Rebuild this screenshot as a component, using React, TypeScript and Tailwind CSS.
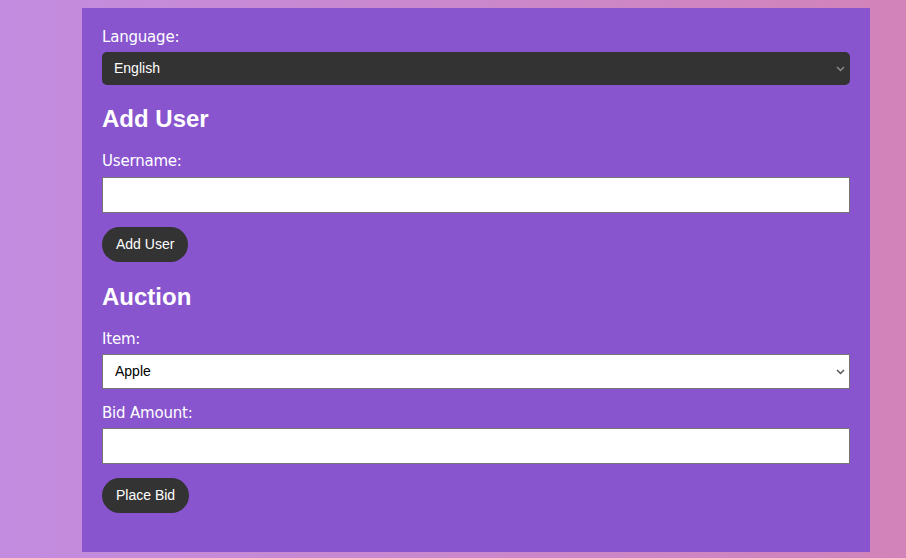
import { useState } from 'react';

function Chevron({ color }: { color: string }) {
  return (
    <svg
      className="pointer-events-none absolute right-[5px] top-1/2 -translate-y-1/2"
      width="9"
      height="6"
      viewBox="0 0 9 6"
      fill="none"
    >
      <path d="M1 1l3.5 3.5L8 1" stroke={color} strokeWidth="1.5" />
    </svg>
  );
}

const labelCls =
  "block text-[15px] leading-[18px] text-white tracking-[-0.2px] [font-family:'DejaVu_Sans',sans-serif]";

export default function App() {
  const [lang, setLang] = useState('English');
  const [item, setItem] = useState('Apple');

  return (
    <div className="min-h-[558px] bg-gradient-to-r from-[#c38ce0] to-[#d283b9] pt-2 [font-family:'Liberation_Sans',Arial,sans-serif]">
      <div className="ml-[82px] w-[788px] bg-[#8855cf] px-5 pt-5 pb-[39px]">
        <label className={labelCls}>Language:</label>
        <div className="relative mt-[6px]">
          <select
            value={lang}
            onChange={(e) => setLang(e.target.value)}
            className="h-[33px] w-full appearance-none rounded-[5px] bg-[#333333] pl-3 text-[14px] text-white outline-none"
          >
            <option>English</option>
            <option>Español</option>
          </select>
          <Chevron color="#8a8a8a" />
        </div>

        <h2 className="mt-5 text-[24px] leading-7 font-bold text-white">Add User</h2>
        <label className={labelCls + ' mt-[19px]'}>Username:</label>
        <input
          type="text"
          className="mt-[7px] block h-[36px] w-full border border-[#767676] bg-white px-2 text-[14px] outline-none"
        />
        <button className="mt-[14px] block h-[35px] rounded-full bg-[#333333] px-[14px] text-[14px] text-white">
          Add User
        </button>

        <h2 className="mt-[21px] text-[24px] leading-7 font-bold text-white">Auction</h2>
        <label className={labelCls + ' mt-[19px]'}>Item:</label>
        <div className="relative mt-[6px]">
          <select
            value={item}
            onChange={(e) => setItem(e.target.value)}
            className="h-[35px] w-full appearance-none border border-[#767676] bg-white pl-3 text-[14px] text-black outline-none"
          >
            <option>Apple</option>
            <option>Banana</option>
          </select>
          <Chevron color="#555555" />
        </div>
        <label className={labelCls + ' mt-[15px]'}>Bid Amount:</label>
        <input
          type="number"
          className="mt-[6px] block h-[36px] w-full border border-[#767676] bg-white px-2 text-[14px] outline-none"
        />
        <button className="mt-[14px] block h-[35px] rounded-full bg-[#333333] px-[14px] text-[14px] text-white">
          Place Bid
        </button>
      </div>
    </div>
  );
}
